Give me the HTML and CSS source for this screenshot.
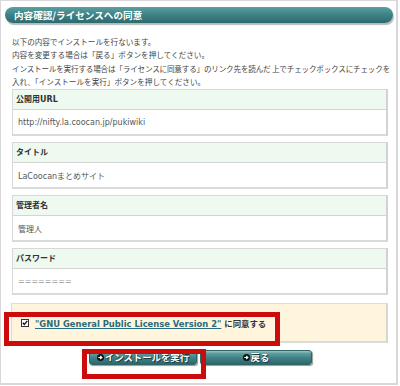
FILE: index.html
```html
<!DOCTYPE html>
<html lang="ja">
<head>
<meta charset="utf-8">
<title>内容確認/ライセンスへの同意</title>
<link rel="stylesheet" href="styles.css">
</head>
<body>
<div class="frame">
  <div class="titlebar"><h1 class="title">内容確認/ライセンスへの同意</h1></div>
  <p class="intro">以下の内容でインストールを行ないます。<br>内容を変更する場合は「戻る」ボタンを押してください。<br><span class="tight">インストールを実行する場合は「ライセンスに同意する」のリンク先を読んだ 上でチェックボックスにチェックを</span><br>入れ、「インストールを実行」ボタンを押してください。</p>

  <div class="field">
    <div class="field-label">公開用URL</div>
    <div class="field-value">http://nifty.la.coocan.jp/pukiwiki</div>
  </div>
  <div class="field">
    <div class="field-label">タイトル</div>
    <div class="field-value">LaCoocanまとめサイト</div>
  </div>
  <div class="field">
    <div class="field-label">管理者名</div>
    <div class="field-value">管理人</div>
  </div>
  <div class="field">
    <div class="field-label">パスワード</div>
    <div class="field-value pw">========</div>
  </div>

  <div class="agree">
    <span class="check"><svg width="8" height="8" viewBox="0 0 8 8"><rect x="0.5" y="0.5" width="7" height="7" fill="#fff" stroke="#333"/><path d="M1.8 3.8 L3.3 5.5 L6.3 1.8" fill="none" stroke="#111" stroke-width="1.3"/></svg></span>
    <span class="agree-text"><a class="license" href="#">"GNU General Public License Version 2"</a> に同意する</span>
  </div>

  <div class="buttons">
    <button class="btn btn-install"><svg class="ico" width="7" height="7" viewBox="0 0 7 7"><circle cx="3.5" cy="3.5" r="3.5" fill="#111"/><path d="M1.3 3.5 H4.2 M3.2 2 L4.9 3.5 L3.2 5" fill="none" stroke="#fff" stroke-width="1.1"/></svg>インストールを実行</button>
    <button class="btn btn-back"><svg class="ico" width="7" height="7" viewBox="0 0 7 7"><circle cx="3.5" cy="3.5" r="3.5" fill="#111"/><path d="M1.3 3.5 H4.2 M3.2 2 L4.9 3.5 L3.2 5" fill="none" stroke="#fff" stroke-width="1.1"/></svg>戻る</button>
  </div>

  <span class="mark mark-agree"></span>
  <span class="mark mark-btn"></span>
</div>
</body>
</html>
```
FILE: styles.css
```css
html, body {
  margin: 0;
  padding: 0;
  background: #fff;
}
body {
  font-family: "DejaVu Sans", "Noto Sans CJK JP", sans-serif;
  color: #444;
}
.frame {
  position: relative;
  box-sizing: border-box;
  width: 398px;
  height: 385px;
  border: 1px solid #d8d8d8;
  border-right-width: 2px;
  border-bottom-width: 2px;
  background: #fff;
}
.titlebar {
  width: 388px;
  height: 16px;
  margin: 6px 0 0 4px;
  border-radius: 8px;
  background: linear-gradient(#5d9fa1 0%, #3f8487 45%, #2c6a6e 100%);
  box-shadow: 1px 2px 1px #b8b8b8;
}
.title {
  margin: 0;
  padding-left: 9px;
  font-family: "Noto Sans CJK JP", sans-serif;
  font-size: 9.6px;
  font-weight: bold;
  line-height: 16px;
  color: #fff;
}
.intro {
  margin: 12px 0 1px 11px;
  font-family: "Noto Sans CJK JP", sans-serif;
  font-size: 7.6px;
  line-height: 13.3px;
  color: #444;
  white-space: nowrap;
}
.tight {
  letter-spacing: -0.2px;
}
.field {
  box-sizing: border-box;
  width: 376px;
  height: 47px;
  margin: 0 0 6px 11px;
  border: 1px solid #d8d8d8;
  border-right: 2px solid #d2d2d2;
  border-bottom: 2px solid #dadada;
  display: flex;
  flex-direction: column;
}
.field-label {
  box-sizing: border-box;
  height: 20px;
  padding-left: 3px;
  background: #eefaf0;
  border-bottom: 1px solid #d4d4d4;
  font-size: 8px;
  font-weight: bold;
  line-height: 19px;
  color: #333;
}
.field-value {
  flex: 1;
  display: flex;
  align-items: center;
  padding-left: 5px;
  font-size: 8px;
  color: #555;
}
.field-value.pw {
  color: #999;
}
.agree {
  box-sizing: border-box;
  width: 377px;
  height: 40px;
  margin: 8px 0 0 10px;
  border: 1px solid #dcdcdc;
  border-right: 2px solid #d6d6d6;
  border-bottom: 2px solid #dcdcdc;
  background: #fff5dc;
  display: flex;
  align-items: center;
  padding-left: 9px;
  gap: 6px;
}
.check {
  display: flex;
  width: 8px;
  height: 8px;
}
.agree-text {
  font-size: 8.4px;
  font-weight: bold;
  color: #333;
}
.license {
  color: #2a6b7c;
  text-decoration: underline;
}
.buttons {
  display: flex;
  justify-content: center;
  gap: 3px;
  margin: 7px 0 0 4px;
}
.btn {
  box-sizing: border-box;
  height: 15px;
  padding: 0;
  border: 1px solid #2f6467;
  border-radius: 3px;
  background: linear-gradient(#9cc3c4 0%, #5f9ea0 18%, #3f8084 55%, #2c686c 100%);
  box-shadow: 1px 1px 1px #9a9a9a;
  display: flex;
  align-items: center;
  justify-content: center;
  gap: 1px;
  font-family: "Noto Sans CJK JP", sans-serif;
  font-size: 9.4px;
  font-weight: bold;
  color: #fff;
  text-shadow: 0 0 1px #123, 1px 1px 0 #1d3f42;
  line-height: 13px;
}
.btn-install {
  width: 108px;
}
.btn-back {
  width: 112px;
}
.ico {
  flex: none;
}
.mark {
  position: absolute;
  box-sizing: border-box;
  border: 5px solid #cc0c0c;
  pointer-events: none;
}
.mark-agree {
  left: 3px;
  top: 311px;
  width: 276px;
  height: 34px;
}
.mark-btn {
  left: 81px;
  top: 348px;
  width: 124px;
  height: 30px;
}
```
